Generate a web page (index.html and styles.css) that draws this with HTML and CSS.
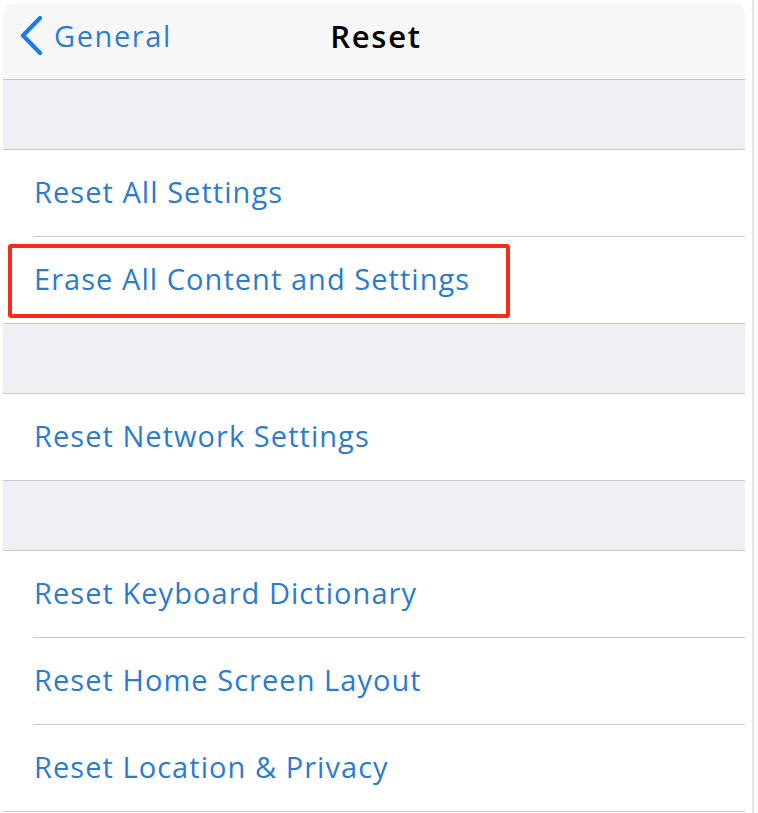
FILE: index.html
```html
<!DOCTYPE html>
<html>
<head>
<meta charset="utf-8">
<link rel="stylesheet" href="styles.css">
</head>
<body>
<div class="page">
  <div class="panel">
    <div class="nav">
      <div class="back">
        <svg class="chev" width="26" height="40" viewBox="0 0 26 40"><path d="M22 2 L5 19.5 L22 37" fill="none" stroke="#1a7de6" stroke-width="4.2" stroke-linecap="round" stroke-linejoin="round"/></svg>
        <span class="back-label">General</span>
      </div>
      <div class="title">Reset</div>
    </div>
    <div class="gap"></div>
    <div class="group">
      <div class="row inset">Reset All Settings</div>
      <div class="row highlighted">Erase All Content and Settings<span class="mark"></span></div>
    </div>
    <div class="gap"></div>
    <div class="group">
      <div class="row">Reset Network Settings</div>
    </div>
    <div class="gap"></div>
    <div class="group">
      <div class="row inset">Reset Keyboard Dictionary</div>
      <div class="row inset">Reset Home Screen Layout</div>
      <div class="row">Reset Location &amp; Privacy</div>
    </div>
  </div>
  <div class="edge"></div>
</div>
</body>
</html>
```
FILE: styles.css
```css
html, body {
  margin: 0;
  padding: 0;
  background: #ffffff;
  height: 813px;
  overflow: hidden;
}
.page {
  display: flex;
  height: 813px;
}
.panel {
  width: 742px;
  margin-left: 3px;
  margin-top: 3px;
  font-family: "Open Sans", Roboto, "Liberation Sans", sans-serif;
}
.edge {
  width: 2px;
  margin-left: 7px;
  background: #e6e6ea;
  height: 813px;
}
.nav {
  position: relative;
  height: 77px;
  box-sizing: border-box;
  background: #f7f7f8;
  border-bottom: 1px solid #c4c4c8;
  border-radius: 10px 10px 0 0;
  display: flex;
  align-items: center;
}
.back {
  display: flex;
  align-items: center;
  margin-left: 15px;
  margin-top: -10px;
  color: #2b7dd0;
  font-size: 29px;
  line-height: 40px;
  letter-spacing: 1.6px;
}
.chev {
  display: block;
}
.back-label {
  margin-left: 10px;
}
.title {
  position: absolute;
  left: 0;
  right: 0;
  top: 13px;
  line-height: 40px;
  text-align: center;
  font-size: 31px;
  font-weight: 600;
  color: #000;
  padding-left: 4px;
  letter-spacing: 1.7px;
}
.gap {
  height: 70px;
  box-sizing: border-box;
  background: #efeff4;
  border-bottom: 1px solid #c8c7cc;
}
.group {
  background: #fff;
  border-bottom: 1px solid #c8c7cc;
}
.row {
  position: relative;
  height: 87px;
  box-sizing: border-box;
  display: flex;
  align-items: center;
  padding-left: 31px;
  padding-bottom: 3px;
  font-size: 29px;
  line-height: 40px;
  letter-spacing: 1.05px;
  color: #2b7bcf;
}
.group .row:last-child {
  height: 86px;
}
.row.inset::after {
  content: "";
  position: absolute;
  left: 30px;
  right: 0;
  bottom: 0;
  height: 1px;
  background: #c8c7cc;
}
.mark {
  position: absolute;
  left: 5px;
  top: 7px;
  width: 502px;
  height: 74px;
  box-sizing: border-box;
  border: 4px solid #fa2a14;
  border-radius: 3px;
}
```
